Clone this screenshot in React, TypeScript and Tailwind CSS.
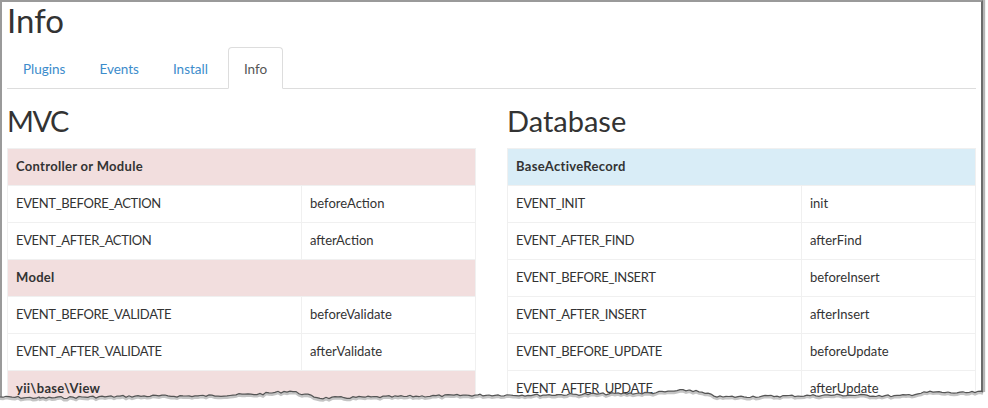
import React from 'react'

type Row = [string, string]
type Section = { title: string; rows: Row[] }

const mvc: Section[] = [
  { title: 'Controller or Module', rows: [['EVENT_BEFORE_ACTION', 'beforeAction'], ['EVENT_AFTER_ACTION', 'afterAction']] },
  { title: 'Model', rows: [['EVENT_BEFORE_VALIDATE', 'beforeValidate'], ['EVENT_AFTER_VALIDATE', 'afterValidate']] },
  { title: 'yii\\base\\View', rows: [] },
]

const db: Section[] = [
  {
    title: 'BaseActiveRecord',
    rows: [
      ['EVENT_INIT', 'init'],
      ['EVENT_AFTER_FIND', 'afterFind'],
      ['EVENT_BEFORE_INSERT', 'beforeInsert'],
      ['EVENT_AFTER_INSERT', 'afterInsert'],
      ['EVENT_BEFORE_UPDATE', 'beforeUpdate'],
      ['EVENT_AFTER_UPDATE', 'afterUpdate'],
    ],
  },
]

function EventTable({ sections, tone }: { sections: Section[]; tone: 'danger' | 'info' }) {
  const head = tone === 'danger' ? 'bg-[#f2dede]' : 'bg-[#d9edf7]'
  return (
    <table className="w-full border-collapse text-[13px] text-[#333]">
      <tbody>
        {sections.map((s) => (
          <React.Fragment key={s.title}>
            <tr className={head}>
              <th colSpan={2} className="h-[37px] border border-[#f0f0f0] px-2 text-left font-bold tracking-[0.3px]">
                {s.title}
              </th>
            </tr>
            {s.rows.map(([name, fn]) => (
              <tr key={name}>
                <td className="h-[37px] w-[294px] border border-[#f0f0f0] px-2 tracking-[-0.35px]">{name}</td>
                <td className="h-[37px] border border-[#f0f0f0] px-2">{fn}</td>
              </tr>
            ))}
          </React.Fragment>
        ))}
      </tbody>
    </table>
  )
}

function TornEdge() {
  // jagged tear line across the bottom of the shot
  const anchors: [number, number][] = [
    [0, 13], [40, 14], [90, 13], [150, 12], [200, 12], [260, 10], [290, 7], [320, 14], [380, 13],
    [430, 12], [480, 11], [540, 11], [600, 10], [650, 9], [690, 6], [720, 13], [780, 12], [840, 11],
    [900, 12], [930, 8], [960, 9], [983, 8],
  ]
  const pts: string[] = []
  let seed = 7
  const rnd = () => {
    seed = (seed * 9301 + 49297) % 233280
    return seed / 233280
  }
  for (let i = 0; i < anchors.length - 1; i++) {
    const [x0, y0] = anchors[i]
    const [x1, y1] = anchors[i + 1]
    for (let x = x0; x < x1; x += 3) {
      const t = (x - x0) / (x1 - x0)
      pts.push(`${x},${(y0 + (y1 - y0) * t + (rnd() - 0.5) * 2.2).toFixed(1)}`)
    }
  }
  pts.push('983,8')
  const line = pts.join(' ')
  return (
    <svg className="absolute left-0 bottom-0" width="988" height="24" viewBox="0 0 988 24">
      <polygon points={`${line} 988,8 988,24 0,24`} fill="#fff" />
      <polyline points={line} fill="none" stroke="#c4c4c4" strokeWidth="3" transform="translate(0,1.5)" />
      <polyline points={line} fill="none" stroke="#555" strokeWidth="1.2" />
    </svg>
  )
}

export default function App() {
  const tabs = ['Plugins', 'Events', 'Install', 'Info']
  return (
    <div className="relative w-[988px] h-[408px] overflow-hidden bg-white" style={{ fontFamily: 'Lato, "Open Sans", sans-serif' }}>
      <div className="w-[983px] h-[430px] border-l-2 border-t-2 border-r-2 border-l-[#9a9a9a] border-t-[#9a9a9a] border-r-[#6b6b6b] shadow-[2px_0_1px_#b5b5b5] px-[5px]">
        <h1 className="h-[45px] text-[33px] leading-[36px] text-[#333]">Info</h1>

        <ul className="flex h-[42px] border-b border-[#ddd] text-[13.5px]">
          {tabs.map((t) => (
            <li key={t} className={t === 'Install' ? 'mr-[4px]' : 'mr-[2px]'}>
              <span
                className={
                  t === 'Info'
                    ? 'block h-[42px] px-[15px] pt-[11px] rounded-t-[4px] border border-[#ddd] border-b-white bg-white text-[#555]'
                    : 'block h-[41px] px-[15px] pt-[11px] border border-transparent text-[#3c8ccb]'
                }
              >
                {t}
              </span>
            </li>
          ))}
        </ul>

        <div className="grid grid-cols-2 gap-[31px] pt-[17px]">
          <div>
            <h2 className="h-[42px] text-[29px] leading-[29px] tracking-[-1.5px] text-[#333]">MVC</h2>
            <EventTable sections={mvc} tone="danger" />
          </div>
          <div>
            <h2 className="h-[42px] text-[29px] leading-[29px] text-[#333]">Database</h2>
            <EventTable sections={db} tone="info" />
          </div>
        </div>
      </div>
      <TornEdge />
    </div>
  )
}
